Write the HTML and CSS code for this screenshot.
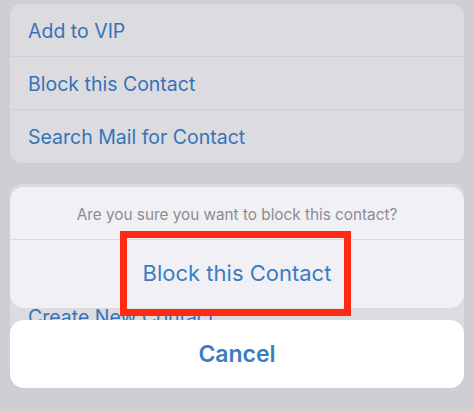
FILE: index.html
```html
<!DOCTYPE html>
<html>
  <head>
    <title>Block Contact</title>
    <link rel="stylesheet" href="styles.css">
  </head>
  <body>
    <div class="screen">
      <div class="group">
        <div class="row">Add to VIP</div>
        <div class="row">Block this Contact</div>
        <div class="row">Search Mail for Contact</div>
      </div>

      <!-- rows above this one sit under the alert -->
      <div class="group second">
        <div class="row">Create New Contact</div>
      </div>

      <div class="sheet">
        <div class="alert">
          <div class="message">Are you sure you want to block this contact?</div>
          <div class="action">Block this Contact</div>
        </div>
        <div class="cancel">Cancel</div>
      </div>

      <div class="highlight"></div>
    </div>
  </body>
</html>
```

FILE: styles.css
```css
body {
  margin: 0;
  background: #cfced3;
  font-family: Inter, "Liberation Sans", sans-serif;
}

.screen {
  position: relative;
  width: 474px;
  height: 411px;
  overflow: hidden;
  padding-top: 4px;
  box-sizing: border-box;
}

.group {
  margin: 0 10px;
  background: #dcdbe0;
  border-radius: 12px;
}

.group.second {
  margin-top: 21px;
  padding-top: 106px;
}

.row {
  height: 53px;
  line-height: 54px;
  padding-left: 18px;
  font-size: 19.5px;
  color: #3573b8;
  border-bottom: 1px solid #cfced4;
  box-sizing: border-box;
}

.row:last-child {
  border-bottom: none;
}

.sheet {
  position: absolute;
  left: 10px;
  right: 10px;
  top: 187px;
  display: flex;
  flex-direction: column;
  gap: 12px;
}

.alert {
  background: #f1f0f5;
  border-radius: 14px;
}

.message {
  height: 52px;
  line-height: 56px;
  text-align: center;
  font-size: 15.3px;
  color: #8c8c91;
  border-bottom: 1px solid #dcdbe0;
}

.action {
  height: 68px;
  line-height: 66px;
  text-align: center;
  font-size: 22px;
  color: #3b7dc2;
}

.cancel {
  height: 68px;
  line-height: 68px;
  text-align: center;
  background: #ffffff;
  border-radius: 14px;
  font-size: 23px;
  font-weight: 600;
  color: #3b7dc2;
}

.highlight {
  position: absolute;
  left: 120px;
  top: 231px;
  width: 231px;
  height: 85px;
  border: 7px solid #ff2a12;
  box-sizing: border-box;
}
```
